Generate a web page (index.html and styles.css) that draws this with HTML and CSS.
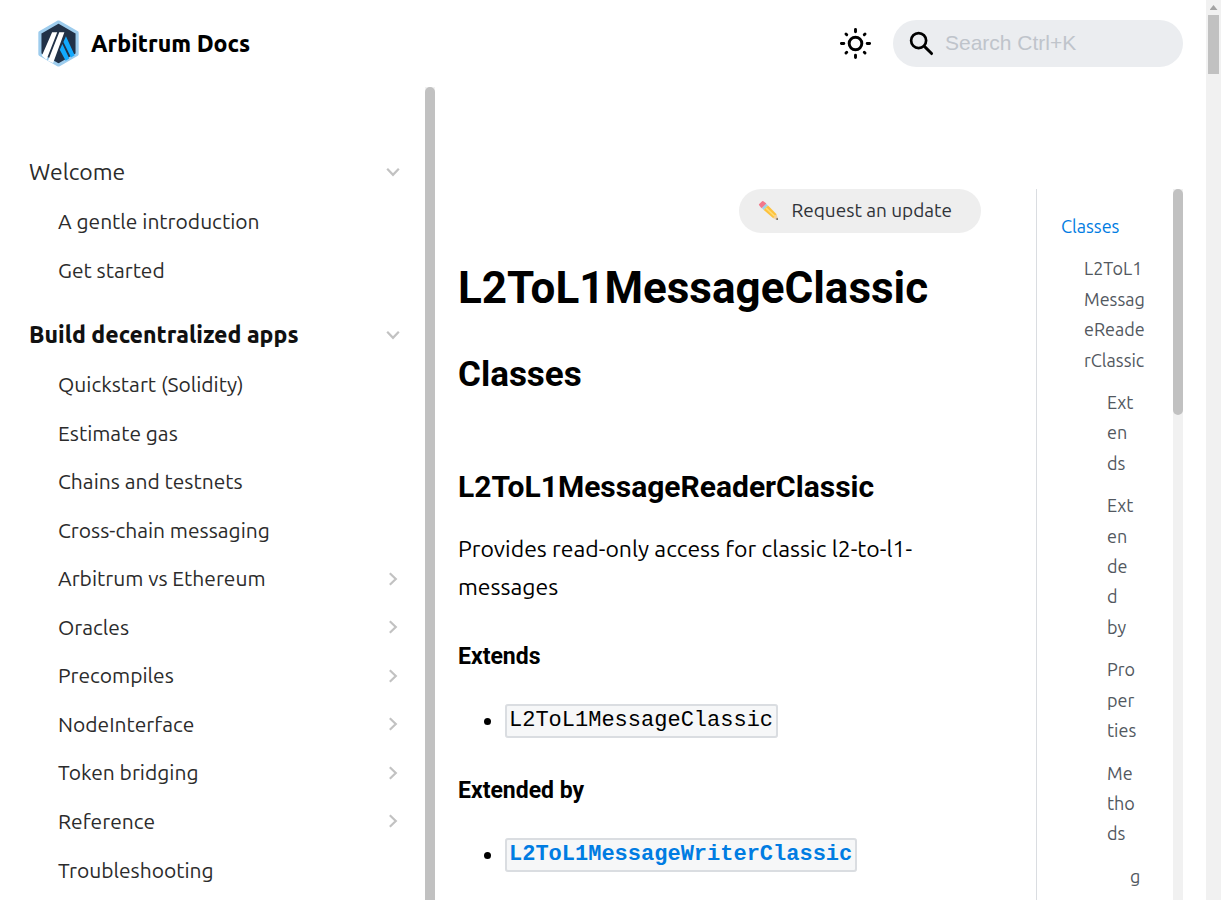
FILE: index.html
```html
<!DOCTYPE html>
<html lang="en">
<head>
<meta charset="utf-8">
<meta name="viewport" content="width=device-width, initial-scale=1">
<title>L2ToL1MessageClassic | Arbitrum Docs</title>
<link rel="stylesheet" href="styles.css">
</head>
<body>
<svg class="sprite" aria-hidden="true">
  <symbol id="chevron" viewBox="0 0 14 14"><path d="M1.2 3.800 7 9.800l5.800-6" fill="none" stroke="#c2c2c2" stroke-width="2.200"/></symbol>
</svg>
<div class="window">
  <div class="page">
    <header class="navbar">
      <a class="brand" href="#">
        <svg class="brand-logo" viewBox="0 0 42 48" aria-hidden="true">
          <path d="M21 2 40 13v22L21 46 2 35V13z" fill="#213147" stroke="#9dcced" stroke-width="3.200" stroke-linejoin="round"/>
          <path d="M26 22.500 28.600 16.500 37.500 36 33.800 38.200zM22.300 30.500 25 24.500 32 39.300 28.300 41.500z" fill="#12aaff"/>
          <path d="M14.500 12.500h5.200L8.700 40.500 4 36.500zM21.800 12.500H27L15.500 44 10.300 41.500z" fill="#fff"/>
        </svg>
        <span>Arbitrum Docs</span>
      </a>
      <div class="navbar-tools">
        <button class="theme-toggle" type="button" aria-label="Switch color mode">
          <svg viewBox="0 0 36 36" fill="none" stroke="#000" stroke-width="3" stroke-linecap="round"><circle cx="18" cy="18" r="6.500"/><path d="M18 3.500v2.500M18 30v2.500M3.500 18H6M30 18h2.500M8.200 8.200 9 9M27 27l.8.8M8.200 27.800 9 27M27 9l.8-.8"/></svg>
        </button>
        <label class="search">
          <svg viewBox="0 0 26 26" fill="none" stroke="#000" stroke-linecap="round" aria-hidden="true"><circle cx="10" cy="10" r="7.800" stroke-width="2.800"/><path d="m16 16 7.500 7.500" stroke-width="3"/></svg>
          <input type="search" placeholder="Search Ctrl+K" aria-label="Search">
        </label>
      </div>
    </header>
    <div class="columns">
      <nav class="sidebar" aria-label="Docs">
        <div class="menu">
          <a class="menu-category" href="#">Welcome<svg class="chevron"><use href="#chevron"/></svg></a>
          <ul class="menu-list">
            <li><a href="#">A gentle introduction</a></li>
            <li><a href="#">Get started</a></li>
          </ul>
          <a class="menu-category active" href="#">Build decentralized apps<svg class="chevron"><use href="#chevron"/></svg></a>
          <ul class="menu-list">
            <li><a href="#">Quickstart (Solidity)</a></li>
            <li><a href="#">Estimate gas</a></li>
            <li><a href="#">Chains and testnets</a></li>
            <li><a href="#">Cross-chain messaging</a></li>
            <li><a href="#">Arbitrum vs Ethereum<svg class="chevron closed"><use href="#chevron"/></svg></a></li>
            <li><a href="#">Oracles<svg class="chevron closed"><use href="#chevron"/></svg></a></li>
            <li><a href="#">Precompiles<svg class="chevron closed"><use href="#chevron"/></svg></a></li>
            <li><a href="#">NodeInterface<svg class="chevron closed"><use href="#chevron"/></svg></a></li>
            <li><a href="#">Token bridging<svg class="chevron closed"><use href="#chevron"/></svg></a></li>
            <li><a href="#">Reference<svg class="chevron closed"><use href="#chevron"/></svg></a></li>
            <li><a href="#">Troubleshooting</a></li>
          </ul>
        </div>
        <div class="scroll-track"><div class="scroll-thumb full"></div></div>
      </nav>
      <main class="article">
        <div class="article-tools">
          <a class="update" href="#">
            <svg viewBox="0 0 22 22" aria-hidden="true"><path d="m2 5 3-3 2.500 2-3.500 3.500z" fill="#f2788b" stroke="#f2788b" stroke-width="2" stroke-linejoin="round"/><path d="m4 8.500 4.500-4.500 2 1.800L6 10.500z" fill="#9fd3e6"/><path d="m6 10.500 4.500-4.700L19.500 15 16 19z" fill="#fdc23d"/><path d="m8.500 8.500 9 8.500" stroke="#ffdc75" stroke-width="1.500"/><path d="m16 19 3.500-4 1.500 6z" fill="#f2cfa1"/><path d="m18.500 20.200 2-1.700.5 2.500z" fill="#555"/></svg>
            <span>Request an update</span>
          </a>
        </div>
        <h1>L2ToL1MessageClassic</h1>
        <h2>Classes</h2>
        <h3>L2ToL1MessageReaderClassic</h3>
        <p>Provides read-only access for classic l2-to-l1-<br>messages</p>
        <h4>Extends</h4>
        <ul><li><code>L2ToL1MessageClassic</code></li></ul>
        <h4>Extended by</h4>
        <ul><li><a href="#"><code>L2ToL1MessageWriterClassic</code></a></li></ul>
      </main>
      <aside class="toc">
        <ul class="toc-list">
          <li><a class="current" href="#">Classes</a></li>
          <li class="level-2"><a href="#">L2ToL1<br>Messag<br>eReade<br>rClassic</a></li>
          <li class="level-3"><a href="#">Ext<br>en<br>ds</a></li>
          <li class="level-3"><a href="#">Ext<br>en<br>de<br>d<br>by</a></li>
          <li class="level-3"><a href="#">Pro<br>per<br>ties</a></li>
          <li class="level-3"><a href="#">Me<br>tho<br>ds</a></li>
          <li class="level-4"><a href="#">g</a></li>
        </ul>
        <div class="scroll-track"><div class="scroll-thumb partial"></div></div>
      </aside>
    </div>
  </div>
  <div class="window-scroll">
    <div class="scroll-arrow"></div>
    <div class="window-thumb"></div>
  </div>
</div>
</body>
</html>
```
FILE: styles.css
```css
* { box-sizing: border-box; }
body {
  margin: 0;
  background: #fff;
  color: #000;
  font-family: Ubuntu, "Noto Sans", sans-serif;
}
a { color: inherit; text-decoration: none; }
ul { margin: 0; padding: 0; }
.sprite { display: none; }

.window { display: flex; height: 100vh; overflow: hidden; }
.page { flex: 1; min-width: 0; display: flex; flex-direction: column; }

.navbar {
  display: flex;
  align-items: center;
  justify-content: space-between;
  padding: 20px 23px 20px 37px;
}
.brand {
  display: flex;
  align-items: center;
  gap: 11px;
  font-size: 23px;
  font-weight: 800;
}
.brand-logo { width: 43px; height: 47px; }
.navbar-tools { display: flex; align-items: center; gap: 20px; }
.theme-toggle {
  display: flex;
  padding: 0;
  border: 0;
  background: none;
}
.theme-toggle svg { width: 35px; height: 35px; }
.search {
  display: flex;
  align-items: center;
  gap: 11px;
  width: 290px;
  height: 47px;
  padding: 0 16px;
  border-radius: 24px;
  background: #ebedf0;
}
.search svg { flex: none; width: 25px; height: 25px; }
.search input {
  flex: 1;
  min-width: 0;
  padding: 0 0 2px;
  border: 0;
  outline: 0;
  background: none;
  font: 21px "Liberation Sans", sans-serif;
}
.search input::placeholder { color: #bfc4cb; opacity: 1; }

.columns { flex: 1; min-height: 0; display: flex; }

.sidebar { flex: none; width: 435px; display: flex; overflow: hidden; }
.menu { flex: 1; padding: 60px 25px 0 29px; }
.menu-category, .menu-list a {
  display: flex;
  align-items: center;
  justify-content: space-between;
}
.menu-category {
  padding: 5px 0;
  color: #2b2b2b;
  font-size: 23px;
  line-height: 40px;
}
.menu-category.active { color: #111; font-weight: 800; }
.menu-list { list-style: none; padding-left: 29px; margin-bottom: 16px; }
.menu-list a {
  padding: 8px 0;
  color: #2b2b2b;
  font-size: 21px;
  line-height: 1.55;
}
.chevron { flex: none; width: 14px; height: 14px; }
.closed { transform: rotate(-90deg); }

.scroll-track { flex: none; width: 10px; background: #f1f1f1; }
.scroll-thumb { border-radius: 5px; background: #c1c1c1; }
.full { height: 100%; border-radius: 5px 5px 0 0; }
.partial { height: 226px; }

.article { flex: 1; min-width: 0; padding: 102px 55px 0 23px; }
.article-tools { display: flex; justify-content: flex-end; margin-bottom: 27px; }
.update {
  display: flex;
  align-items: center;
  gap: 12px;
  height: 44px;
  padding: 0 29px 2px 19px;
  border-radius: 22px;
  background: #eee;
  color: #303338;
  font-size: 19px;
  line-height: 42px;
}
.update svg { width: 21px; height: 21px; }
h1, h2, h3, h4 { margin: 0; font-family: Roboto, sans-serif; font-weight: 700; }
h1 { font-size: 44px; line-height: 56px; margin-bottom: 37px; }
h2 { font-size: 35px; line-height: 44px; margin-bottom: 70px; }
h3 { font-size: 30px; line-height: 40px; margin-bottom: 23px; }
h4 { font-size: 23px; line-height: 30px; margin-bottom: 30px; }
.article p { margin: 0 0 36px; font-size: 23px; line-height: 38px; white-space: nowrap; }
.article ul { padding-left: 47px; margin-bottom: 36px; font-size: 23px; line-height: 38px; }
.article li a { color: #007ce2; font-weight: 700; }
code {
  padding: 2px 3px 3px 2px;
  border: 2px solid #dadde1;
  border-radius: 3px;
  background: #f6f7f8;
  font-family: "Liberation Mono", monospace;
  font-size: 22px;
  line-height: 30px;
  vertical-align: 3px;
}

.toc {
  flex: none;
  width: 147px;
  margin: 102px 23px 0 0;
  border-left: 1px solid #dadde1;
  display: flex;
  overflow: hidden;
}
.toc-list {
  flex: 1;
  padding: 22px 0 0 24px;
  list-style: none;
  color: #525860;
  font-size: 18px;
  line-height: 1.69;
}
.toc-list li { margin-bottom: 12px; }
.toc-list a { display: block; white-space: nowrap; }
.toc-list .current { color: #007ce2; }
.level-2 { padding-left: 23px; }
.level-3 { padding-left: 46px; }
.level-4 { padding-left: 69px; }

.window-scroll {
  flex: none;
  width: 15px;
  padding: 5px 2px 0;
  background: #f1f1f1;
}
.scroll-arrow {
  width: 8px;
  height: 5px;
  margin: 0 auto 5px;
  background: #a3a3a3;
  clip-path: polygon(50% 0, 100% 100%, 0 100%);
}
.window-thumb { height: 59px; background: #c1c1c1; }
```
